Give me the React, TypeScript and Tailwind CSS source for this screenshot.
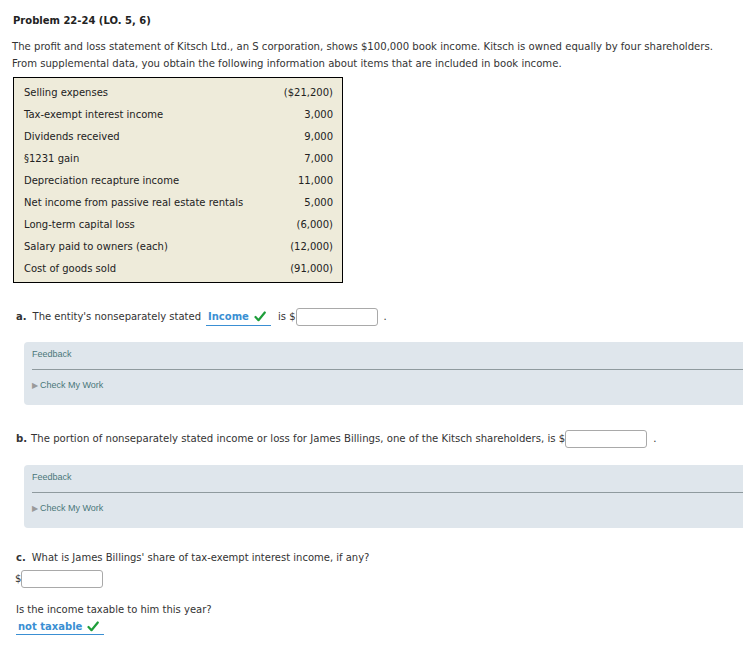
const rows: [string, string][] = [
  ['Selling expenses', '($21,200)'],
  ['Tax-exempt interest income', '3,000'],
  ['Dividends received', '9,000'],
  ['§1231 gain', '7,000'],
  ['Depreciation recapture income', '11,000'],
  ['Net income from passive real estate rentals', '5,000'],
  ['Long-term capital loss', '(6,000)'],
  ['Salary paid to owners (each)', '(12,000)'],
  ['Cost of goods sold', '(91,000)'],
]

function Check() {
  return (
    <svg width="12" height="11" viewBox="0 0 12 11" className="inline-block ml-[5px]">
      <path d="M1.5 6 L4.5 9.2 L10.8 1.5" fill="none" stroke="#1e9e3a" strokeWidth="2.2" strokeLinecap="round" strokeLinejoin="round" />
    </svg>
  )
}

function Answer({ text, width }: { text: string; width: string }) {
  return (
    <span className={`inline-flex items-center border-b border-[#3a8fd3] ${width} pl-[2px] h-[17px] font-bold text-[#3a8fd3]`}>
      {text}
      <Check />
    </span>
  )
}

function Input({ w = 'w-[82px]' }: { w?: string }) {
  return <span className={`inline-block ${w} h-[18px] border border-[#a9a9a9] rounded-[3px] bg-white align-middle`} />
}

function FeedbackPanel() {
  return (
    <div className="ml-[24px] w-[740px] h-[63px] bg-[#dfe6ec] rounded-l-[4px] pl-[8px] pt-[6px] font-['Liberation_Sans',sans-serif] text-[9px] text-[#4a7779]">
      <div className="h-[13px] leading-[13px]">Feedback</div>
      <div className="mt-[8px] border-t border-[#8f9a9e]" />
      <div className="mt-[9px] h-[13px] leading-[13px] flex items-center">
        <span className="text-[#9a9a9a] text-[8px] mr-[2px]">▶</span>
        Check My Work
      </div>
    </div>
  )
}

export default function App() {
  return (
    <div className="w-[743px] h-[645px] overflow-hidden bg-white font-['DejaVu_Sans',sans-serif] text-[10px] leading-[17px] text-[#333]">
      <div className="pl-[13px] pt-[12px] font-bold text-[#222]">Problem 22-24 (LO. 5, 6)</div>
      <div className="pl-[12px] mt-[9px] text-[10.1px]">
        <div>The profit and loss statement of Kitsch Ltd., an S corporation, shows $100,000 book income. Kitsch is owned equally by four shareholders.</div>
        <div>From supplemental data, you obtain the following information about items that are included in book income.</div>
      </div>
      <div className="ml-[13px] mt-[5px] w-[330px] border border-black bg-[#eeebda] pt-[3px] pb-[2px] pl-[10px] pr-[9px] text-[#222]">
        {rows.map(([label, value]) => (
          <div key={label} className="flex justify-between items-center h-[22.1px]">
            <span>{label}</span>
            <span>{value}</span>
          </div>
        ))}
      </div>

      <div className="mt-[25px] pl-[16px] flex items-center h-[18px]">
        <span className="font-bold mr-[6px]">a.</span>
        <span>The entity's nonseparately stated</span>
        <span className="ml-[5px]"><Answer text="Income" width="w-[65px]" /></span>
        <span className="ml-[7px]">is $</span>
        <Input />
        <span className="ml-[6px]">.</span>
      </div>
      <div className="mt-[16px]"><FeedbackPanel /></div>

      <div className="mt-[25px] pl-[16px] flex items-center h-[18px] font-['Liberation_Sans_Narrow','DejaVu_Sans_Condensed',sans-serif] text-[11.25px]">
        <span className="font-bold mr-[4px]">b.</span>
        <span>The portion of nonseparately stated income or loss for James Billings, one of the Kitsch shareholders, is $</span>
        <Input />
        <span className="ml-[6px]">.</span>
      </div>
      <div className="mt-[17px]"><FeedbackPanel /></div>

      <div className="mt-[21px] pl-[16px] h-[17px] flex items-center">
        <span className="font-bold mr-[6px]">c.</span>
        <span>What is James Billings' share of tax-exempt interest income, if any?</span>
      </div>
      <div className="mt-[4px] pl-[15px] flex items-center h-[18px]">
        <span>$</span>
        <Input />
      </div>
      <div className="mt-[13px] pl-[16px] h-[17px]">Is the income taxable to him this year?</div>
      <div className="pl-[16px]"><Answer text="not taxable" width="w-[88px]" /></div>
    </div>
  )
}
